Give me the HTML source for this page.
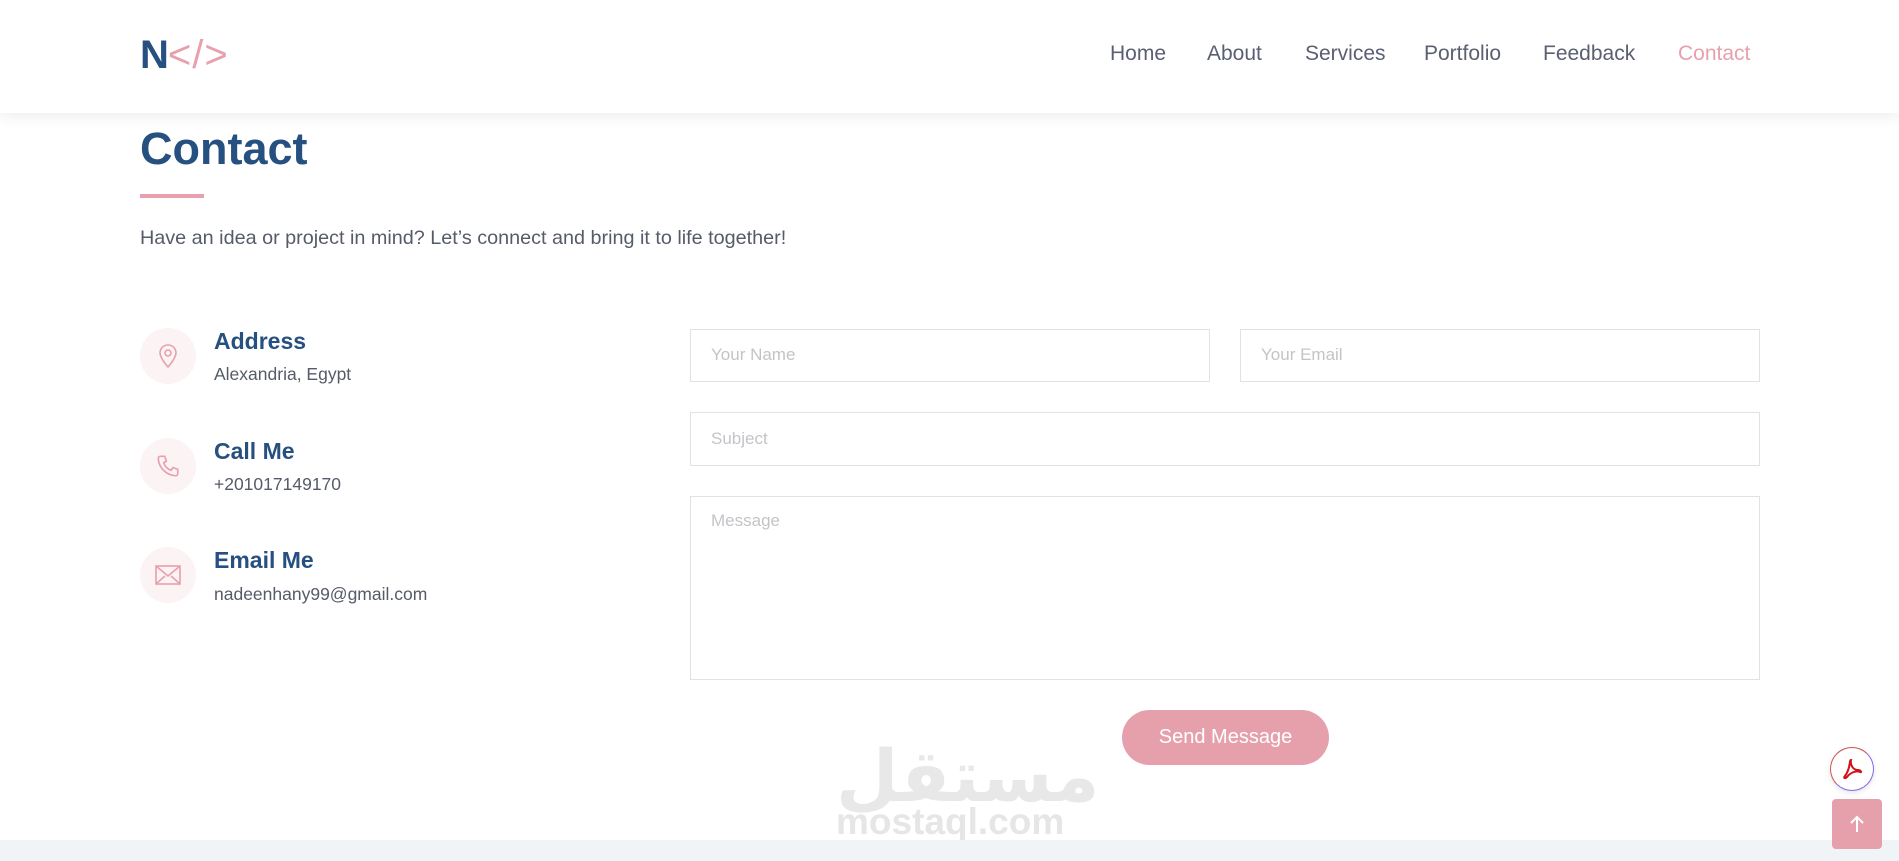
<!DOCTYPE html>
<html><head><meta charset="utf-8"><style>
*{margin:0;padding:0;box-sizing:border-box}
body{width:1899px;height:861px;position:relative;overflow:hidden;background:#fff;font-family:"Liberation Sans",sans-serif}
.nav{position:absolute;left:0;top:0;width:1899px;height:113px;background:#fff;box-shadow:0 4px 14px rgba(0,0,0,.07);z-index:2}
.logo{position:absolute;left:140px;top:33px;font-size:40px;font-weight:bold;color:#26507f;letter-spacing:-1px}
.logo span{color:#e8a0ad;font-weight:normal;letter-spacing:1px}
.menu{position:absolute;top:42px;font-size:21px;color:#5a6072}
.abs{position:absolute}
h1{position:absolute;left:140px;top:123px;font-size:45px;color:#26507f;font-weight:bold}
.line{position:absolute;left:140px;top:194px;width:64px;height:4px;background:#e8a0ad}
.p{position:absolute;left:140px;top:227px;font-size:19.8px;color:#555b68}
.ic{position:absolute;left:140px;width:56px;height:56px;border-radius:50%;background:#fbf3f4;display:flex;align-items:center;justify-content:center}
.t{position:absolute;left:214px;font-size:23px;font-weight:bold;color:#26507f}
.s{position:absolute;left:214px;font-size:17.5px;color:#555b68}
.in{position:absolute;border:1.5px solid #e2e2e2;background:#fff;font-size:17px;color:#c4c4c8;padding-left:20px}
</style></head><body>
<div class="nav">
<div class="logo">N<span>&lt;/&gt;</span></div>
<div class="menu" style="left:1110px">Home</div>
<div class="menu" style="left:1207px">About</div>
<div class="menu" style="left:1305px">Services</div>
<div class="menu" style="left:1424px">Portfolio</div>
<div class="menu" style="left:1543px">Feedback</div>
<div class="menu" style="left:1678px;color:#e8a0ad">Contact</div>
</div>
<h1>Contact</h1>
<div class="line"></div>
<div class="p">Have an idea or project in mind? Let’s connect and bring it to life together!</div>

<div class="ic" style="top:328px"><svg width="24" height="26" viewBox="0 0 24 26" fill="none" stroke="#e8a0ad" stroke-width="1.6"><path d="M12 24C12 24 4 15 4 10a8 8 0 0 1 16 0c0 5-8 14-8 14z"/><circle cx="12" cy="10" r="3"/></svg></div>
<div class="t" style="top:328px">Address</div>
<div class="s" style="top:364px">Alexandria, Egypt</div>

<div class="ic" style="top:438px"><svg width="26" height="26" viewBox="0 0 24 24" fill="none" stroke="#e8a0ad" stroke-width="1.5"><path d="M5 3l4 0 1.5 4.5-2.5 1.5a11 11 0 0 0 7 7l1.5-2.5 4.5 1.5v4a2 2 0 0 1-2 2A17 17 0 0 1 3 5a2 2 0 0 1 2-2z"/></svg></div>
<div class="t" style="top:438px">Call Me</div>
<div class="s" style="top:474px">+201017149170</div>

<div class="ic" style="top:547px"><svg width="26" height="20" viewBox="0 0 26 20" fill="none" stroke="#e8a0ad" stroke-width="1.6"><rect x="1" y="1" width="24" height="18"/><path d="M1 1l12 10L25 1M1 19l9-8M25 19l-9-8"/></svg></div>
<div class="t" style="top:547px">Email Me</div>
<div class="s" style="top:584px">nadeenhany99@gmail.com</div>

<div class="in" style="left:690px;top:329px;width:520px;height:53px;line-height:50px">Your Name</div>
<div class="in" style="left:1240px;top:329px;width:520px;height:53px;line-height:50px">Your Email</div>
<div class="in" style="left:690px;top:412px;width:1070px;height:54px;line-height:51px">Subject</div>
<div class="in" style="left:690px;top:496px;width:1070px;height:184px;padding-top:14px">Message</div>

<div class="abs" style="left:836px;top:730px;font-size:72px;font-weight:bold;color:#e8e8e8;font-family:'Noto Sans CJK SC','DejaVu Sans',sans-serif;line-height:80px">مستقل</div>
<div class="abs" style="left:836px;top:803px;font-size:37px;font-weight:bold;color:#e6e6e6;line-height:38px">mostaql.com</div>

<div class="abs" style="left:1122px;top:710px;width:207px;height:55px;border-radius:28px;background:#e6a0ac;color:#fff;font-size:20px;text-align:center;line-height:55px">Send Message</div>

<div class="abs" style="left:0;top:840px;width:1899px;height:21px;background:#f1f4f7"></div>

<div class="abs" style="left:1830px;top:747px;width:44px;height:44px;border-radius:50%;background:#fff;border:1.5px solid #c55;border-right-color:#86e;border-bottom-color:#86e;box-shadow:0 2px 6px rgba(0,0,0,.1);display:flex;align-items:center;justify-content:center"><svg width="24" height="24" viewBox="0 0 24 24" fill="none" stroke="#d0121b" stroke-width="2"><path d="M11 3c-2 0 0 8-6 16-2 2 0 3 2 1 3-4 9-7 13-5 2 1 1-2-2-2-5 0-8-5-7-10z"/></svg></div>
<div class="abs" style="left:1832px;top:799px;width:50px;height:50px;border-radius:4px;background:#e6a0ac;display:flex;align-items:center;justify-content:center"><svg width="16" height="18" viewBox="0 0 16 18" fill="none" stroke="#fff" stroke-width="2"><path d="M8 17V2M2 8l6-6 6 6"/></svg></div>
</body></html>
